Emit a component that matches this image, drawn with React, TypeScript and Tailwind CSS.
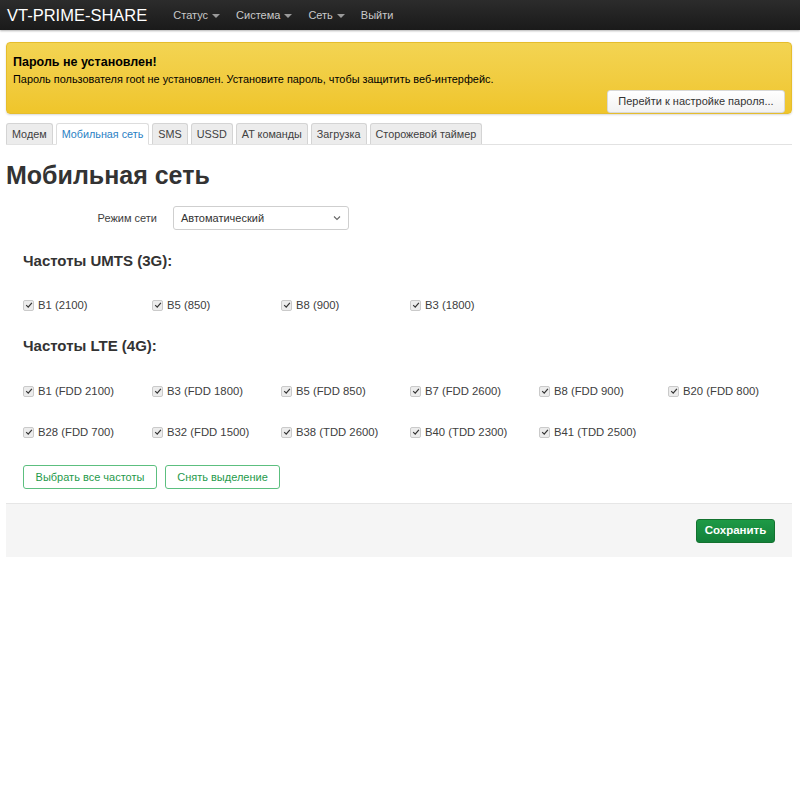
import React from "react";

const umts = ["B1 (2100)", "B5 (850)", "B8 (900)", "B3 (1800)"];
const lte = [
  "B1 (FDD 2100)",
  "B3 (FDD 1800)",
  "B5 (FDD 850)",
  "B7 (FDD 2600)",
  "B8 (FDD 900)",
  "B20 (FDD 800)",
  "B28 (FDD 700)",
  "B32 (FDD 1500)",
  "B38 (TDD 2600)",
  "B40 (TDD 2300)",
  "B41 (TDD 2500)",
];
const tabs = ["Модем", "Мобильная сеть", "SMS", "USSD", "AT команды", "Загрузка", "Сторожевой таймер"];

function Caret() {
  return <span className="ml-[4px] inline-block h-0 w-0 border-x-[4px] border-t-[4px] border-x-transparent border-t-[#9a9a9a] align-middle" />;
}

function Check({ label }: { label: string }) {
  return (
    <label className="flex h-[16px] items-center text-[11.3px] text-[#404040]">
      <span className="mr-[4px] flex h-[11px] w-[11px] items-center justify-center rounded-[2px] border border-[#cacaca] bg-[#ececec]">
        <svg width="8" height="8" viewBox="0 0 10 10">
          <path d="M1.5 5.2 L4 7.6 L8.6 2.4" fill="none" stroke="#333" strokeWidth="1.5" />
        </svg>
      </span>
      {label}
    </label>
  );
}

export default function App() {
  return (
    <div className="min-h-[800px] bg-white font-['Liberation_Sans',Arial,sans-serif] text-[#333]">
      <div className="flex h-[30px] items-center bg-gradient-to-b from-[#2c2c2c] to-[#1a1a1a] px-[7px] shadow-[0_1px_2px_rgba(0,0,0,0.3)]">
        <span className="text-[16.5px] leading-none text-white">VT-PRIME-SHARE</span>
        <nav className="ml-[26px] flex items-center gap-[16px] text-[11px] text-[#c9c9c9]">
          <span>Статус<Caret /></span>
          <span>Система<Caret /></span>
          <span>Сеть<Caret /></span>
          <span>Выйти</span>
        </nav>
      </div>

      <div className="pl-[6px] pr-[8px]">
        <div className="mt-[12px] flex h-[72px] flex-col rounded-[4px] border border-[#e6bd2c] bg-gradient-to-b from-[#f3d452] to-[#efc52a] px-[6px] pt-[11px] shadow-[0_1px_2px_rgba(0,0,0,0.15)]">
          <div className="text-[12.5px] font-bold leading-[16px] text-black">Пароль не установлен!</div>
          <div className="mt-[2px] text-[10.9px] leading-[14px] text-black">
            Пароль пользователя root не установлен. Установите пароль, чтобы защитить веб-интерфейс.
          </div>
          <div className="mt-[4px] flex justify-end">
            <button className="h-[23px] w-[178px] rounded-[3px] border border-[#d9d9d9] bg-gradient-to-b from-white to-[#f2f2f2] text-[11px] text-[#333]">
              Перейти к настройке пароля...
            </button>
          </div>
        </div>

        <div className="mt-[9px] flex gap-[3px] border-b border-[#e2e2e2]">
          {tabs.map((t, i) => (
            <div
              key={t}
              className={
                i === 1
                  ? "-mb-px flex h-[22px] items-center rounded-t-[3px] border border-b-white border-[#ddd] bg-white px-[5px] text-[10.8px] text-[#2a7fc4]"
                  : "flex h-[21px] items-center rounded-t-[3px] border border-b-0 border-[#d4d4d4] bg-[#ececec] px-[5px] text-[10.8px] text-[#404040]"
              }
            >
              {t}
            </div>
          ))}
        </div>

        <h1 className="mt-[15px] text-[25px] font-bold leading-[30px] text-[#333]">Мобильная сеть</h1>

        <div className="mt-[16px] flex items-center">
          <span className="w-[151px] text-right text-[11px] text-[#404040]">Режим сети</span>
          <div className="ml-[16px] flex h-[24px] w-[176px] items-center justify-between rounded-[3px] border border-[#cfcfcf] bg-white px-[7px] text-[11px] text-[#333]">
            <span>Автоматический</span>
            <svg width="8" height="6" viewBox="0 0 8 6">
              <path d="M1 1.5 L4 4.5 L7 1.5" fill="none" stroke="#666" strokeWidth="1.1" />
            </svg>
          </div>
        </div>

        <div className="pl-[17px]">
          <h2 className="mt-[21px] text-[15px] font-bold leading-[20px] text-[#333]">Частоты UMTS (3G):</h2>
          <div className="mt-[26px] grid grid-cols-[repeat(6,129px)]">
            {umts.map((u) => (
              <Check key={u} label={u} />
            ))}
          </div>

          <h2 className="mt-[23px] text-[15px] font-bold leading-[20px] text-[#333]">Частоты LTE (4G):</h2>
          <div className="mt-[27px] grid grid-cols-[repeat(6,129px)] gap-y-[25px]">
            {lte.map((u) => (
              <Check key={u} label={u} />
            ))}
          </div>

          <div className="mt-[25px] flex gap-[8px]">
            <button className="h-[24px] w-[134px] rounded-[3px] border border-[#5cbf7f] bg-white text-[11px] text-[#1f9a4b]">
              Выбрать все частоты
            </button>
            <button className="h-[24px] w-[115px] rounded-[3px] border border-[#5cbf7f] bg-white text-[11px] text-[#1f9a4b]">
              Снять выделение
            </button>
          </div>
        </div>

        <div className="mt-[14px] flex h-[54px] items-center justify-end border-t border-[#e6e6e6] bg-[#f5f5f5] pr-[17px]">
          <button className="h-[24px] w-[79px] rounded-[3px] border border-[#13722f] bg-gradient-to-b from-[#1e9a46] to-[#12803a] text-[11.5px] font-bold text-white">
            Сохранить
          </button>
        </div>
      </div>
    </div>
  );
}
